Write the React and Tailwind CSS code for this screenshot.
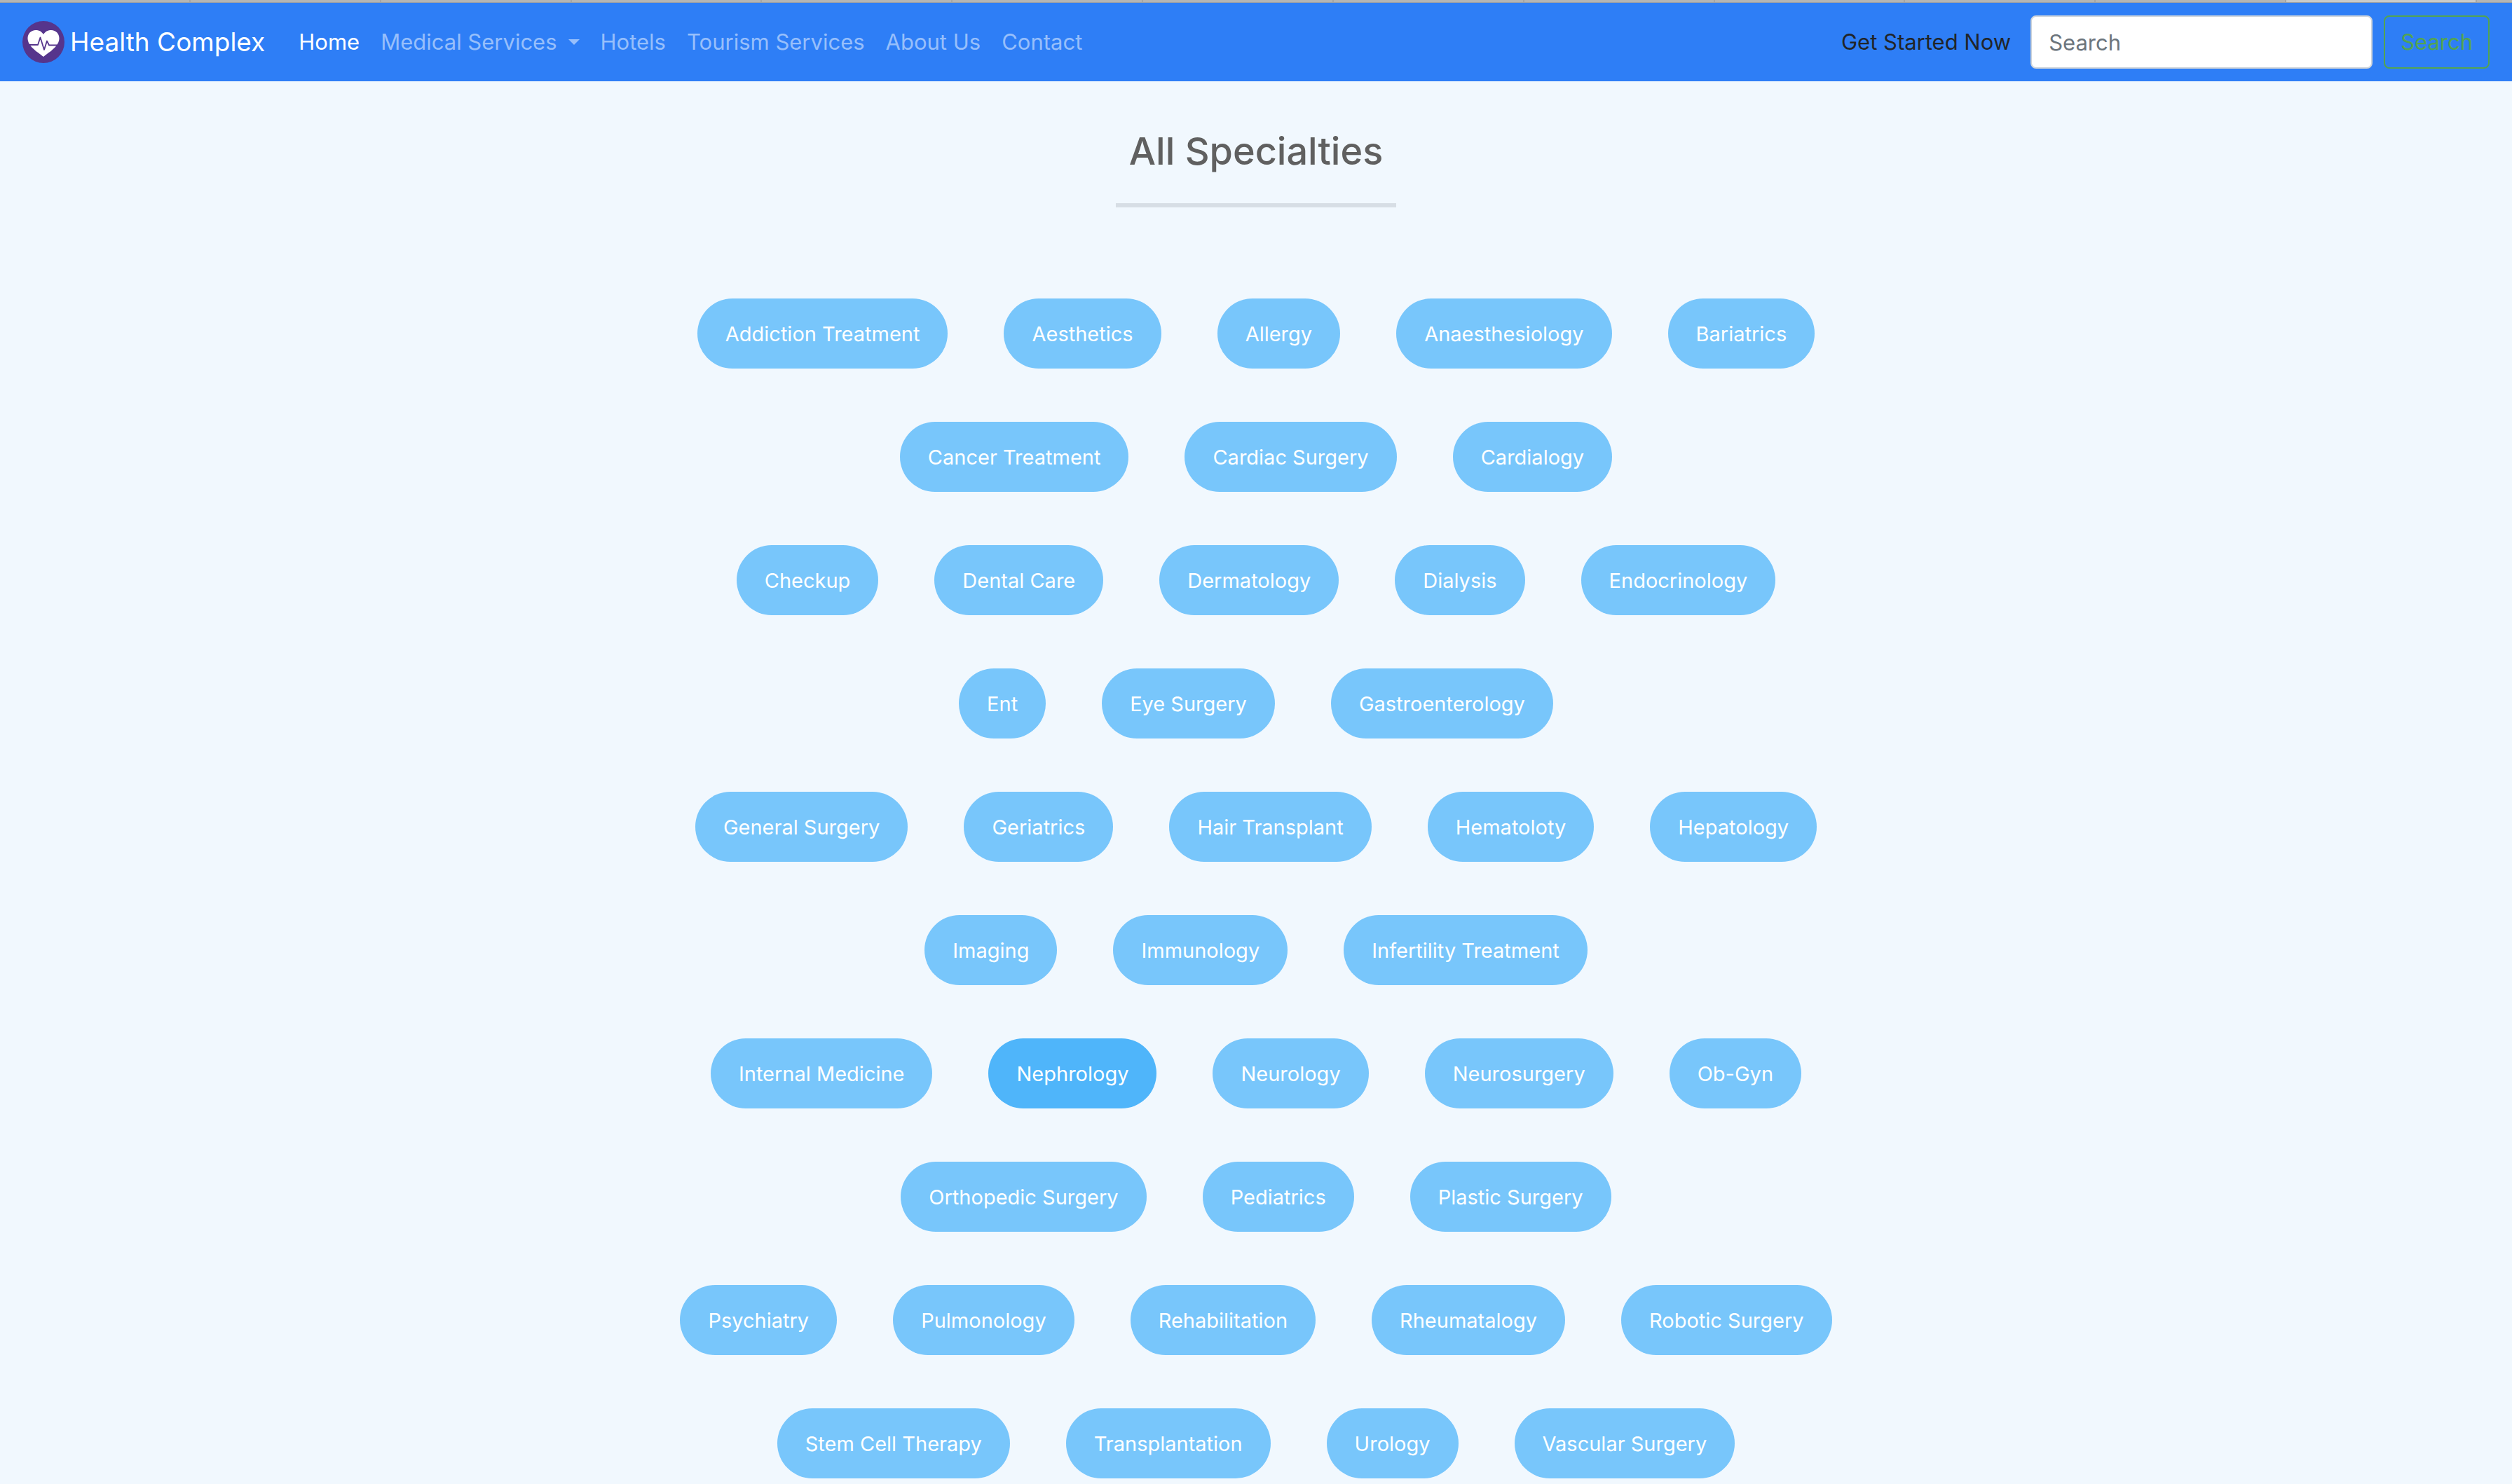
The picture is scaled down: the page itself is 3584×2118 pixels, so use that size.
const ROWS = [
  ["Addiction Treatment", "Aesthetics", "Allergy", "Anaesthesiology", "Bariatrics"],
  ["Cancer Treatment", "Cardiac Surgery", "Cardialogy"],
  ["Checkup", "Dental Care", "Dermatology", "Dialysis", "Endocrinology"],
  ["Ent", "Eye Surgery", "Gastroenterology"],
  ["General Surgery", "Geriatrics", "Hair Transplant", "Hematoloty", "Hepatology"],
  ["Imaging", "Immunology", "Infertility Treatment"],
  ["Internal Medicine", "Nephrology", "Neurology", "Neurosurgery", "Ob-Gyn"],
  ["Orthopedic Surgery", "Pediatrics", "Plastic Surgery"],
  ["Psychiatry", "Pulmonology", "Rehabilitation", "Rheumatalogy", "Robotic Surgery"],
  ["Stem Cell Therapy", "Transplantation", "Urology", "Vascular Surgery"],
];

const NAV = ["Home", "Medical Services", "Hotels", "Tourism Services", "About Us", "Contact"];

function Logo() {
  return (
    <svg viewBox="0 0 60 60" className="size-[60px] shrink-0" aria-hidden="true">
      <circle cx="30" cy="30" r="30" fill="#56358c" />
      <path
        d="M30 19C27 14.500 23 13 19 13C12.500 13 7.500 18 7.500 24.500C7.500 36 20 43 30 51C40 43 52.500 36 52.500 24.500C52.500 18 47.500 13 41 13C37 13 33 14.500 30 19Z"
        fill="#fff"
      />
      <path
        d="M10 34H22L25.500 23.500L31 41L35 28.500L38 34.500H52"
        fill="none"
        stroke="#56358c"
        strokeWidth="1.800"
        strokeLinejoin="round"
      />
    </svg>
  );
}

function TabStrip() {
  return (
    <div className="flex h-1 border-b border-[#a3a3a3] bg-[#b5b5b3] pr-[50px]" aria-hidden="true">
      {Array.from({ length: 13 }, (_, i) => (
        <div
          key={i}
          className={i === 12 ? "flex-1 border-r-2 border-[#a5a5a3] bg-[#c9cac8]" : "flex-1 border-r-2 border-[#a5a5a3]"}
        />
      ))}
    </div>
  );
}

export default function App() {
  return (
    <div className="min-h-screen bg-[#f1f8fe] font-['Inter','Liberation_Sans',sans-serif]">
      <TabStrip />
      <header className="flex h-28 items-center bg-[#2e7ef6] px-8">
        <a href="#" className="flex items-center gap-2 text-[37px] leading-[60px] text-white">
          <Logo />
          Health Complex
        </a>
        <nav className="ml-12 flex gap-[30px] text-[31px] leading-12">
          {NAV.map((label) => (
            <a
              key={label}
              href="#"
              className={label === "Home" ? "text-white" : "flex items-center text-[#97bffb]"}
            >
              {label}
              {label === "Medical Services" && (
                <span className="ml-4 border-x-8 border-t-8 border-x-transparent border-t-[#97bffb]" />
              )}
            </a>
          ))}
        </nav>
        <form className="ml-auto flex items-center gap-4 text-[31px] leading-12" onSubmit={(e) => e.preventDefault()}>
          <a href="#" className="mr-3 text-[#212529]">Get Started Now</a>
          <input
            type="search"
            aria-label="Search"
            placeholder="Search"
            className="h-19 w-[488px] rounded-lg border-2 border-[#ced4da] bg-white px-6 placeholder:text-[#6c757d]"
          />
          <button type="submit" className="h-19 rounded-lg border-2 border-[#53a451] px-[22px] text-[#53a451]">
            Search
          </button>
        </form>
      </header>
      <main className="flex flex-col items-center pb-1">
        <h1 className="mt-16 text-[54px] font-medium leading-[72px] text-[#606060]">All Specialties</h1>
        <hr className="mt-[38px] w-[400px] border-0 bg-[#d7dee5] pt-[6px]" />
        <div className="mt-[130px] flex flex-col gap-[76px]">
          {ROWS.map((row) => (
            <div key={row[0]} className="flex justify-center gap-20">
              {row.map((label) => (
                <button
                  key={label}
                  type="button"
                  className={
                    label === "Nephrology"
                      ? "h-[100px] rounded-[50px] bg-[#4fb5fa] px-10 pt-[2px] text-[29px] text-white"
                      : "h-[100px] rounded-[50px] bg-[#78c6fb] px-10 pt-[2px] text-[29px] text-white"
                  }
                >
                  {label}
                </button>
              ))}
            </div>
          ))}
        </div>
      </main>
    </div>
  );
}
